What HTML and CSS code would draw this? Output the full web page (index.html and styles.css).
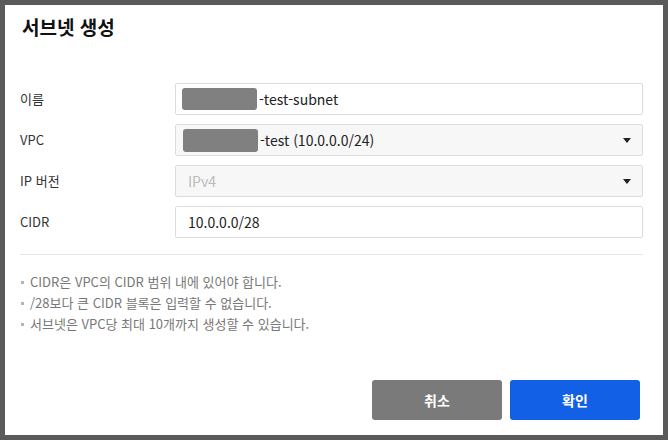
FILE: index.html
```html
<!DOCTYPE html>
<html lang="ko">
<head>
<meta charset="utf-8">
<title>서브넷 생성</title>
<link rel="stylesheet" href="styles.css">
</head>
<body>
<div class="dialog">
  <h1 class="title">서브넷 생성</h1>
  <div class="form">
    <label class="label">이름</label>
    <div class="field"><span class="redact"></span>-test-subnet</div>
    <label class="label">VPC</label>
    <div class="field select"><span class="redact vpc"></span>-test (10.0.0.0/24)
      <svg class="caret" width="8" height="5" viewBox="0 0 8 5"><path d="M0 0H8L4 5Z" fill="#222"/></svg>
    </div>
    <label class="label">IP 버전</label>
    <div class="field select disabled">IPv4
      <svg class="caret" width="8" height="5" viewBox="0 0 8 5"><path d="M0 0H8L4 5Z" fill="#222"/></svg>
    </div>
    <label class="label">CIDR</label>
    <div class="field">10.0.0.0/28</div>
  </div>
  <div class="sep"></div>
  <ul class="notes">
    <li>CIDR은 VPC의 CIDR 범위 내에 있어야 합니다.</li>
    <li>/28보다 큰 CIDR 블록은 입력할 수 없습니다.</li>
    <li>서브넷은 VPC당 최대 10개까지 생성할 수 있습니다.</li>
  </ul>
  <div class="actions">
    <button class="btn cancel">취소</button>
    <button class="btn ok">확인</button>
  </div>
</div>
</body>
</html>
```

FILE: styles.css
```css
html, body {
  margin: 0;
  padding: 0;
}
body {
  background: #5a5a5a;
  font-family: "Noto Sans CJK KR", "Noto Sans", sans-serif;
  color: #222;
}
.dialog {
  margin: 5px;
  width: 658px;
  height: 430px;
  box-sizing: border-box;
  background: #fff;
  padding: 10px 20px 15px 15px;
  display: flex;
  flex-direction: column;
}
.title {
  margin: 0 0 0 2px;
  font-size: 19px;
  font-weight: 700;
  line-height: 24px;
  color: #111;
}
.form {
  margin-top: 44px;
  display: grid;
  grid-template-columns: 155px 1fr;
  grid-auto-rows: 32px;
  row-gap: 9px;
}
.label {
  display: flex;
  align-items: center;
  font-size: 13px;
  color: #333;
  padding-bottom: 2px;
}
.field {
  position: relative;
  display: flex;
  align-items: center;
  box-sizing: border-box;
  height: 32px;
  border: 1px solid #dcdcdc;
  border-radius: 2px;
  padding: 0 12px;
  font-size: 14px;
  color: #222;
  background: #fff;
}
.select {
  background: #f7f7f7;
}
.disabled {
  color: #bbb;
}
.redact {
  display: inline-block;
  width: 75px;
  height: 22px;
  background: #808080;
  border-radius: 3px;
  margin-left: -6px;
  margin-right: 2px;
}
.redact.vpc {
  margin-left: -5px;
  height: 23px;
}
.caret {
  position: absolute;
  right: 11px;
  top: 13px;
}
.sep {
  margin-top: 16px;
  border-top: 1px solid #e6e6e6;
}
.notes {
  list-style: none;
  margin: 16px 0 0;
  padding: 0 0 0 10px;
  font-size: 13px;
  line-height: 21px;
  color: #777;
}
.notes li {
  position: relative;
}
.notes li::before {
  content: "";
  position: absolute;
  left: -9px;
  top: 10px;
  width: 3px;
  height: 3px;
  background: #b5b5b5;
}
.actions {
  margin-top: auto;
  display: flex;
  justify-content: flex-end;
  gap: 8px;
  padding-right: 3px;
}
.btn {
  width: 130px;
  height: 40px;
  border: none;
  border-radius: 3px;
  font-family: inherit;
  font-size: 14px;
  font-weight: 700;
  color: #fff;
  cursor: pointer;
}
.cancel {
  background: #7a7a7a;
}
.ok {
  background: #1260e6;
}
```
